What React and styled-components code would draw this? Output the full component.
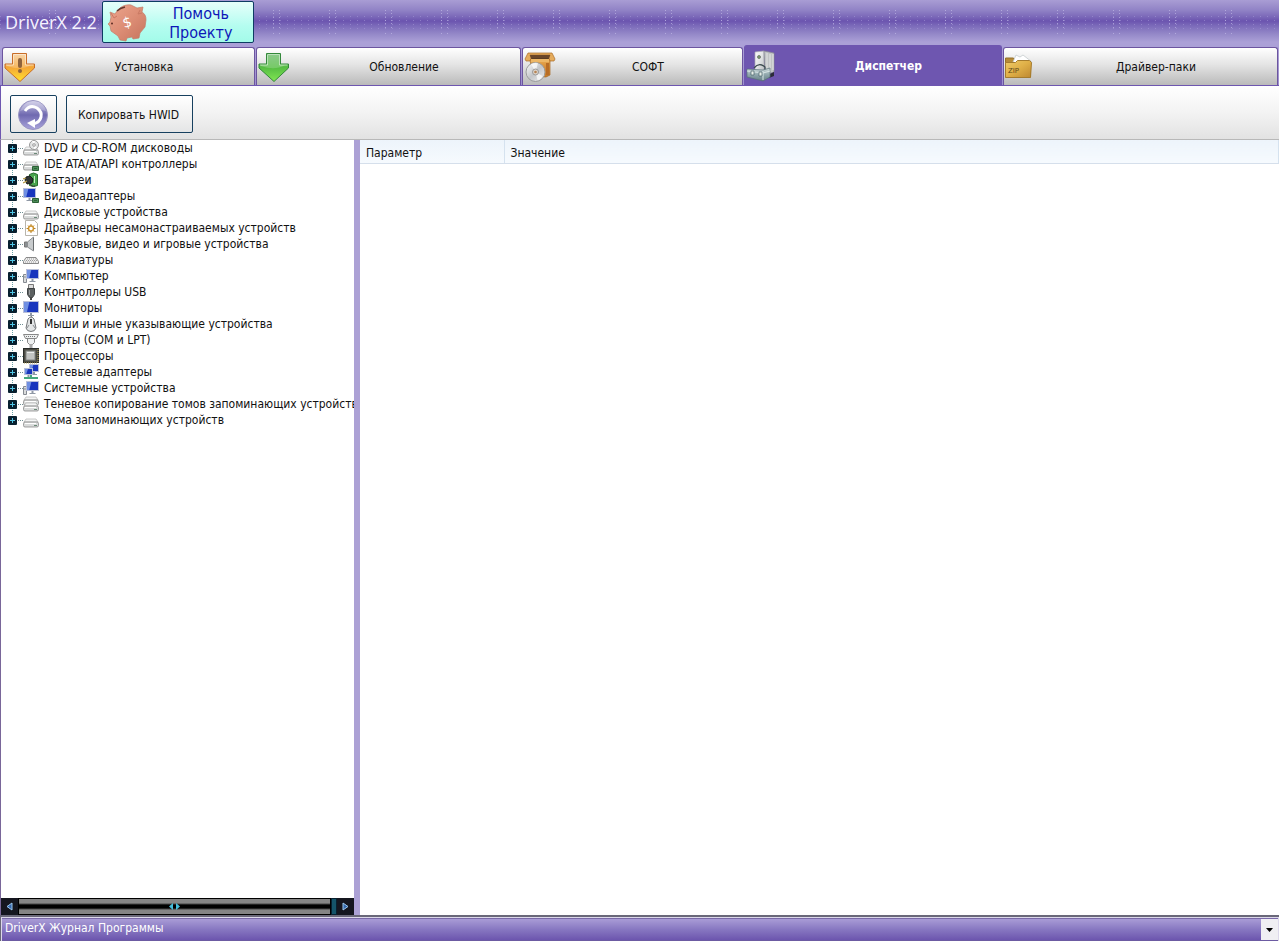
import React from "react";
import styled, { createGlobalStyle, css } from "styled-components";

const sans = `Tahoma, "DejaVu Sans Condensed", "DejaVu Sans", sans-serif`;
const purple = "#6e56b0";
const lilac = "#aca1d5";

const GlobalStyle = createGlobalStyle`
  * { box-sizing: border-box; }
  body { margin: 0; font: 12px/16px ${sans}; color: #111; background: #fff; }
  button, select { font: inherit; color: inherit; }
  svg { flex: none; }
`;

const Window = styled.div`
  display: flex;
  flex-direction: column;
  height: 100vh;
  overflow: hidden;
`;

/* A row of faint dots every 7px, and a row of bright dot pairs every 56px. */
const dots = (y, color) =>
  `linear-gradient(90deg, ${color} 1px, transparent 1px) 0 ${y}px / 7px 1px repeat-x`;
const pairs = (y, color) =>
  `linear-gradient(90deg, ${color} 1px, transparent 1px 6px, ${color} 6px 7px, transparent 7px) 49px ${y}px / 56px 1px repeat-x`;

const Header = styled.header`
  display: flex;
  align-items: center;
  gap: 5px;
  height: 45px;
  padding: 0 0 1px 5px;
  background:
    ${[10, 13, 17, 20, 23, 27, 33].map((y) => pairs(y, "#c9c2ec99")).join(",")},
    ${[16, 20, 24, 28].map((y) => dots(y, "#a99cdb88")).join(",")},
    linear-gradient(#a99dd4 0, #9183c6 10px, #7a67b8 17px, #6b54af 21px, #7c6bba 26px, #9488c8 34px, #aba0d7 42px, #aba0d7 100%);
`;

const Title = styled.h1`
  margin: 0;
  font: 18px/24px "Open Sans", "Noto Sans", sans-serif;
  color: #f6f3ff;
  white-space: nowrap;
`;

const HelpButton = styled.button`
  display: flex;
  align-items: center;
  width: 152px;
  height: 42px;
  padding: 0 4px;
  border: 1px solid #0d3c63;
  border-radius: 2px;
  background: linear-gradient(#e6fffa, #b4fdf0 60%, #a3fbe9);
  color: #0d17b8;
  font-size: 16px;
  line-height: 19px;
`;

const HelpLabel = styled.span`
  flex: 1;
  padding: 1px 0 0 6px;
`;

const Tabs = styled.nav`
  display: grid;
  grid-template-columns: 253fr 265fr 221fr 258fr 275fr;
  height: 41px;
  padding: 0 1px 0 2px;
  gap: 1px;
  background: linear-gradient(#aba0d7 2px, #9d90ce);
  border-bottom: 1px solid ${purple};
`;

const Tab = styled.button`
  display: flex;
  align-items: center;
  min-width: 0;
  margin-top: 2px;
  padding: 0 2px 0 1px;
  border: 1px solid #6c559f;
  border-bottom: 0;
  border-radius: 3px 3px 0 0;
  background: linear-gradient(#fff, #e4e4e4 45%, #bababa);
  ${(p) => p.$active && css`
    margin-top: 0;
    border-color: ${purple};
    background: ${purple};
    color: #fff;
    font-weight: bold;
  `}
`;

const TabLabel = styled.span`
  flex: 1;
  text-align: center;
`;

const Toolbar = styled.div`
  display: flex;
  gap: 9px;
  height: 54px;
  padding: 9px 9px 6px;
  border-left: 1px solid ${purple};
  border-bottom: 1px solid #b8b8b8;
  background: linear-gradient(#fff, #f3f3f3 50%, #e2e2e2);
`;

const ToolButton = styled.button`
  display: flex;
  align-items: center;
  justify-content: center;
  height: 38px;
  width: ${(p) => p.$width}px;
  padding: 2px 2px 0 0;
  border: 1px solid #17405f;
  border-radius: 2px;
  background: linear-gradient(#fff, #f0f0f0 60%, #e4e5e6);
  white-space: nowrap;
`;

const Panes = styled.main`
  display: flex;
  flex: 1;
  min-height: 0;
`;

const TreePane = styled.section`
  display: flex;
  flex-direction: column;
  flex: 0 0 360px;
  min-width: 0;
  border-left: 1px solid #796699;
  border-right: 6px solid ${lilac};
`;

const Tree = styled.ul`
  flex: 1;
  min-height: 0;
  margin: 0;
  padding: 0 0 0 7px;
  overflow: hidden;
  list-style: none;
`;

const TreeRow = styled.li`
  display: flex;
  align-items: center;
  height: 16px;
  white-space: nowrap;
  background: repeating-linear-gradient(#6aa1a9 0 1px, transparent 1px 2px) 4px 0 / 1px 100% no-repeat;
  &:last-child { background-size: 1px 8px; }
`;

const Expander = styled.button`
  display: flex;
  flex: none;
  width: 9px;
  height: 9px;
  padding: 0;
  border: 0;
  background: #08202f;
  border-radius: 1px;
`;

const Branch = styled.span`
  flex: none;
  width: 6px;
  height: 1px;
  background: repeating-linear-gradient(90deg, transparent 0 1px, #6f8f94 1px 2px);
`;

const RowLabel = styled.span`
  padding-left: 5px;
`;

const ScrollBar = styled.div`
  display: flex;
  height: 17px;
  background: #15161f;
`;

const ScrollArrow = styled.button`
  display: flex;
  align-items: center;
  justify-content: center;
  width: 17px;
  padding: 0;
  border: 0;
  background: #15161f;
`;

const Thumb = styled.div`
  display: flex;
  align-items: center;
  justify-content: center;
  flex: 1;
  border: 1px solid #000;
  background: linear-gradient(#858585 0 4px, #000 6px 9px, #858585 11px);
`;

const ScrollRest = styled.div`
  width: 6px;
  border: 1px solid #08202f;
  background: #155469;
`;

const Details = styled.section`
  flex: 1;
  min-width: 0;
`;

const Table = styled.table`
  width: 100%;
  border-collapse: collapse;
  table-layout: fixed;
`;

const HeadCell = styled.th`
  width: ${(p) => p.$width || "auto"};
  height: 23px;
  padding: 3px 6px 0;
  border-right: 1px solid #d5e2ef;
  border-bottom: 1px solid #d5dfeb;
  background: linear-gradient(#edf4fb, #f6fafe);
  text-align: left;
  font-weight: normal;
`;

const Footer = styled.footer`
  position: relative;
  height: 26px;
  padding: 1px 1px 0;
  border-top: 2px solid #6a6879;
  border-left: 1px solid #6a6879;
  background: #dcd8ea;
`;

const LogSelect = styled.select`
  display: block;
  width: 100%;
  height: 23px;
  padding: 0 22px 4px 3px;
  border: 0;
  border-top: 1px solid #7a6aa8;
  border-bottom: 1px solid #6c5ba2;
  border-radius: 0;
  appearance: none;
  background: linear-gradient(#a99cd6, #8777c1 50%, #6c55ae);
  color: #fff;
`;

const DropArrow = styled.span`
  position: absolute;
  top: 2px;
  right: 1px;
  display: flex;
  align-items: center;
  justify-content: center;
  width: 17px;
  height: 21px;
  background: #f0eff3;
  pointer-events: none;
`;

const Svg = ({ size = 16, children }) => (
  <svg width={size} height={size} viewBox={`0 0 ${size} ${size}`} aria-hidden="true">
    {children}
  </svg>
);

const Grad = ({ id, from, mid, to, diagonal }) => (
  <linearGradient id={id} x1="0" y1="0" x2={diagonal ? 1 : 0} y2="1">
    <stop offset="0" stopColor={from} />
    {mid && <stop offset=".5" stopColor={mid} />}
    <stop offset="1" stopColor={to} />
  </linearGradient>
);

const PiggyIcon = () => (
  <svg width="40" height="40" viewBox="0 0 40 40" aria-hidden="true">
    <defs><Grad id="pig" from="#eda68e" mid="#dd8e76" to="#c5735c" diagonal /></defs>
    <path fill="url(#pig)" stroke="#c37c68" strokeWidth=".7" d="M3 20 4 15 3 10l5 2C12 5 18 2 24 3l6 3 6-1-1 5c3 2 4 4 4 8l-1 7-5 6-1 5-6 1-1-2-5 1-1 3-6-1-2-4-7-5-1-5-2-2z" />
    <path stroke="#653830" strokeWidth="1.6" d="M10 9q3-3 8-4" fill="none" />
    <path stroke="#c97963" strokeWidth="1" d="m33 8-2 4 4-1M4 11l3 5 3-2" fill="none" />
    <circle cx="5" cy="21.500" r="1" fill="#5e2c25" />
    <text x="20" y="25" textAnchor="middle" transform="rotate(-15 20 20)" fill="#fff" fontFamily="DejaVu Sans, sans-serif" fontSize="14">$</text>
  </svg>
);

const ArrowIcon = ({ id, light, main, dark, edge, alert }) => (
  <Svg size={32}>
    <defs><Grad id={id} from={light} mid={main} to={dark} /></defs>
    <path fill={`url(#${id})`} stroke={edge} d="M8.500 2.500h14V13h8v4L16 30.500 1 17v-4h7.500z" />
    <path stroke="#fff" strokeOpacity=".55" fill="none" d="M9.500 3.500h12V14h8M2 14h7.500V4" />
    <path fill="#fff" fillOpacity=".2" d="M10 4h11v10h6q-10 6-24 1v-1h7z" />
    {alert && (
      <>
        <rect x="14" y="7" width="4" height="10" rx="2" fill="#8e633c" />
        <circle cx="16" cy="20" r="2" fill="#8e633c" />
      </>
    )}
  </Svg>
);

const BoxDiscIcon = () => (
  <Svg size={32}>
    <defs>
      <Grad id="box" from="#e9ad55" mid="#d78c35" to="#c57a28" />
      <Grad id="disc" from="#fff" mid="#c4c6c9" to="#f1f1f1" diagonal />
    </defs>
    <path fill="url(#box)" stroke="#a76823" strokeWidth=".7" d="M6 8h20v16l-4 2-14-1z" />
    <path fill="#5a3b22" d="M5 4h22l-2 4H7z" />
    <path fill="#e5ac5d" stroke="#aa6b27" strokeWidth=".7" d="M4 2h24l3 6-1 2h-4l-1-3 1-3H6l1 3-1 3H2L1 8z" />
    <path fill="#6a4527" d="M6 4h20l-1 3H7z" />
    <path fill="#edb766" d="M7 8h18v3H7z" />
    <path fill="#b96d25" d="M22 12h3v12h-3z" />
    <circle cx="11.500" cy="21" r="9.500" fill="url(#disc)" stroke="#9a9b9c" />
    <path fill="#fff" fillOpacity=".7" d="M11.500 21 7 13q4-2 7-1zM11.500 21l7 4q-2 4-5 4z" />
    <circle cx="11.500" cy="21" r="3" fill="#ddd4ca" stroke="#999" />
    <circle cx="11.500" cy="21" r="1.300" fill="#b78353" />
  </Svg>
);

const ToolboxIcon = () => (
  <Svg size={32}>
    <defs>
      <Grad id="tower" from="#fcfcfc" mid="#e2e4e5" to="#b9bdc0" diagonal />
      <Grad id="case" from="#d2dede" mid="#91a8ad" to="#668086" />
    </defs>
    <path fill="url(#tower)" stroke="#a9aab2" strokeWidth=".7" d="m9 2 9-1v21H9z" />
    <path fill="#c0c3c4" stroke="#848590" strokeWidth=".7" d="m18 1 10 2v19l-9 3z" />
    <path stroke="#e3e5e6" d="M21 3v19m3-18v17m3-17v16" />
    <circle cx="13" cy="7" r="1.500" fill="#7d9c6f" stroke="#59635a" strokeWidth=".7" />
    <path fill="#2b2b38" d="m22 25 6-3v4l-5 2z" />
    <path fill="none" stroke="#38484c" strokeWidth="1.200" d="M8 18q5-6 11-1v3" />
    <path fill="url(#case)" stroke="#587078" strokeWidth=".7" d="m1 19 16 1 7-2v9l-7 4-16-4z" />
    <path stroke="#d7e5e5" fill="none" d="m1 21 16 2 7-2M17 21v9" />
    <path fill="#e7efe9" stroke="#48616a" strokeWidth=".7" d="M5 21h3v4H5zM13 22h3v4h-3z" />
  </Svg>
);

const ZipIcon = () => (
  <Svg size={32}>
    <defs><Grad id="zip" from="#efcb69" mid="#dfaf47" to="#bd8730" diagonal /></defs>
    <path fill="#b68b38" stroke="#94702a" d="M.5 26V7h8l2 3h15v16z" />
    <path fill="#fff" stroke="#bfc5c9" strokeWidth=".7" d="m8 11 3-7 4 2 3-2 9 7-3 5z" />
    <path fill="url(#zip)" stroke="#a57b2d" d="M.5 11.500h10l2-2h12l2 2-1 15H.5z" />
    <text x="3" y="22" fill="#5f4818" fontFamily="DejaVu Sans, sans-serif" fontSize="7">ZIP</text>
  </Svg>
);

const RefreshIcon = () => (
  <Svg size={32}>
    <defs><Grad id="orb" from="#c7c4e4" mid="#6f69b0" to="#aaa5dc" /></defs>
    <circle cx="16" cy="16" r="14.500" fill="url(#orb)" stroke="#9894c2" />
    <path fill="#fff" fillOpacity=".25" d="M3 12Q8 1 18 2q9 1 11 10Q14 7 3 12z" />
    <path fill="none" stroke="#fff" strokeWidth="3" d="M8 12q5-7 12-3c7 5 5 14-4 16" />
    <path fill="#fff" d="m10 24 8-4v9z" />
  </Svg>
);

const Drive = ({ y = 0 }) => (
  <g transform={`translate(0 ${y})`}>
    <path fill="#f3f4f4" stroke="#b5b5b5" strokeWidth=".7" d="m3 6-2 3h14l-2-3z" />
    <rect x=".5" y="9" width="15" height="5" rx="1.500" fill="#d9dbdb" stroke="#8a8a8a" strokeWidth=".8" />
    <path stroke="#fff" d="M2 10.500h11" />
    <path stroke="#6b8a78" d="M11 12.500h3" />
  </g>
);

const Screen = ({ x = 0, y = 0, w = 12, h = 9 }) => (
  <g transform={`translate(${x} ${y})`}>
    <rect x=".5" y=".5" width={w - 1} height={h - 1} fill="#1936bd" stroke="#b8bfda" />
    <path fill="#6f8fe2" d={`M1 1h${w / 3}L${w / 4} ${h - 1}H1z`} />
    <path fill="#8f98a5" d={`M${w / 2 - 1} ${h}h2v2h2v1h-6v-1h2z`} />
  </g>
);

const Chip = () => (
  <path fill="#4c8b58" stroke="#2c6236" d="M9.500 10.500h6v4h-6zM11 12.500h3" />
);

const Tower = () => <path fill="#dadcdd" stroke="#868b92" d="M.5 6.500h3v8h-3zM1 9h2" />;

const icons = {
  dvd: (
    <>
      <Drive y={1} />
      <circle cx="11" cy="5" r="4.500" fill="#e3e5e5" stroke="#999" />
      <path fill="#fff" d="m11 5-2-4h3zM11 5l3 3-3 1z" />
      <circle cx="11" cy="5" r="1.300" fill="#fff" stroke="#999" />
    </>
  ),
  ide: <><Drive /><Chip /></>,
  battery: (
    <>
      <path fill="#48a44d" stroke="#286b2e" d="M6.500 2.500q4-3 8 0v11q-4 2-8 0z" />
      <path stroke="#c8ecc5" d="M11.500 4v7" />
      <path fill="#303434" stroke="#171b1b" d="m3 5 4-1 3 3-1 4-5 1-2-4z" />
      <path stroke="#b59b48" strokeWidth="1.200" d="m0 7 3-1m-3 5 4-2" />
      <path fill="none" stroke="#333" d="M7 11q1 4 5 3" />
    </>
  ),
  video: <><Screen w={13} h={10} /><Chip /></>,
  disk: <Drive y={1} />,
  generic: (
    <>
      <path fill="#fff" stroke="#b8b5ac" d="M2.500.5h9l3 3v12h-12z" />
      <circle cx="8" cy="8.500" r="2.500" fill="none" stroke="#d29831" strokeWidth="1.500" />
      <path stroke="#b98328" d="M8 4v2m0 5v2M3.500 8.500h2m5 0h2M5 5.500l1 1m4 4 1 1m0-6-1 1m-4 4-1 1" />
    </>
  ),
  sound: (
    <>
      <path fill="#8c9093" stroke="#777" d="M1.500 6h3v5h-3z" />
      <path fill="#c8cbcd" stroke="#8b8f91" d="m4.500 6 6-5v14l-6-4z" />
      <path stroke="#686c6e" d="M10.500 2v12" />
    </>
  ),
  keyboard: (
    <>
      <path fill="#eee" stroke="#888" d="m3 5.500-2.500 4v2h15v-2L13 5.500z" />
      <path stroke="#999" strokeDasharray="1 1" d="M4 7h9M3 8.500h11M2 10h12" />
    </>
  ),
  computer: <><Tower /><Screen x={3} y={1} w={13} h={10} /></>,
  usb: (
    <>
      <path fill="#ddd" stroke="#777" d="M5.500.5h5v4h-5z" />
      <path fill="#5c6061" stroke="#3f4344" d="M4.500 4.500h7v6l-2 3h-3l-2-3z" />
      <path stroke="#989c9d" d="M6.500 6v5" /><path stroke="#444" strokeWidth="2" d="M8 13v3" />
    </>
  ),
  monitor: <Screen y={1} w={16} h={12} />,
  mouse: (
    <>
      <path fill="none" stroke="#777" d="M8 4q3-2 0-4" />
      <path fill="#e3e5e6" stroke="#737679" d="M5 3q3-4 6 0l2 9q-1 3.500-5 3.500T3 12z" />
      <path fill="#333" d="M7 3h2v5H7z" /><path stroke="#8a8d90" d="m6 9-2 3m6-3 2 3" />
    </>
  ),
  port: (
    <>
      <path fill="#eef0f0" stroke="#888" d="M.5 2.500h15l-2 4h-11zM4.500 6.500h7v4l-2 2h-3l-2-2z" />
      <path stroke="#777" strokeDasharray="1 1" d="M3 4.500h10" /><path stroke="#aaa" strokeWidth="3" d="M8 12v4" />
    </>
  ),
  cpu: (
    <>
      <rect x=".5" y=".5" width="15" height="14" fill="#4b4b43" stroke="#292c29" />
      <path stroke="#b7a35d" strokeDasharray="1 1" d="M1 15h14M15 1v14" />
      <rect x="3" y="3" width="9" height="9" fill="#c2c4c2" stroke="#858986" />
      <path stroke="#eceeed" d="M4 4.500h7" />
    </>
  ),
  network: (
    <>
      <Screen x={6} w={10} h={8} /><Screen x={1} y={4} w={9} h={7} />
      <path stroke="#45a77d" strokeWidth="2" d="M1 14h14M8 11v4" />
    </>
  ),
  shadow: <><Drive y={-5} /><Drive y={1} /></>,
};

const tabs = [
  { label: "Установка", icon: <ArrowIcon id="install" light="#f6cb96" main="#f4a737" dark="#ffe22d" edge="#c86d28" alert /> },
  { label: "Обновление", icon: <ArrowIcon id="update" light="#70bd70" main="#56bd43" dark="#82e653" edge="#33883a" /> },
  { label: "СОФТ", icon: <BoxDiscIcon /> },
  { label: "Диспетчер", icon: <ToolboxIcon />, active: true },
  { label: "Драйвер-паки", icon: <ZipIcon /> },
];

const devices = [
  ["dvd", "DVD и CD-ROM дисководы"],
  ["ide", "IDE ATA/ATAPI контроллеры"],
  ["battery", "Батареи"],
  ["video", "Видеоадаптеры"],
  ["disk", "Дисковые устройства"],
  ["generic", "Драйверы несамонастраиваемых устройств"],
  ["sound", "Звуковые, видео и игровые устройства"],
  ["keyboard", "Клавиатуры"],
  ["computer", "Компьютер"],
  ["usb", "Контроллеры USB"],
  ["monitor", "Мониторы"],
  ["mouse", "Мыши и иные указывающие устройства"],
  ["port", "Порты (COM и LPT)"],
  ["cpu", "Процессоры"],
  ["network", "Сетевые адаптеры"],
  ["computer", "Системные устройства"],
  ["shadow", "Теневое копирование томов запоминающих устройств"],
  ["disk", "Тома запоминающих устройств"],
];

export default function App() {
  return (
    <Window>
      <GlobalStyle />
      <Header>
        <Title>DriverX 2.2</Title>
        <HelpButton>
          <PiggyIcon />
          <HelpLabel>Помочь Проекту</HelpLabel>
        </HelpButton>
      </Header>
      <Tabs>
        {tabs.map((tab) => (
          <Tab key={tab.label} $active={tab.active}>
            {tab.icon}
            <TabLabel>{tab.label}</TabLabel>
          </Tab>
        ))}
      </Tabs>
      <Toolbar>
        <ToolButton $width={47} aria-label="Обновить"><RefreshIcon /></ToolButton>
        <ToolButton $width={127}>Копировать HWID</ToolButton>
      </Toolbar>
      <Panes>
        <TreePane>
          <Tree>
            {devices.map(([icon, label]) => (
              <TreeRow key={label}>
                <Expander aria-label={label}>
                  <Svg size={9}><path stroke="#52c6e6" d="M4.500 2v5M2 4.500h5" /></Svg>
                </Expander>
                <Branch />
                <Svg>{icons[icon]}</Svg>
                <RowLabel>{label}</RowLabel>
              </TreeRow>
            ))}
          </Tree>
          <ScrollBar>
            <ScrollArrow aria-label="Влево">
              <Svg size={9}><path fill="#3568ad" stroke="#9cc8ee" d="M7 1v7L2 4.500z" /></Svg>
            </ScrollArrow>
            <Thumb>
              <svg width="11" height="7" viewBox="0 0 11 7" aria-hidden="true">
                <path fill="#45bddb" d="M4 0v7L0 3.500zM7 0v7l4-3.500z" />
              </svg>
            </Thumb>
            <ScrollRest />
            <ScrollArrow aria-label="Вправо">
              <Svg size={9}><path fill="#3568ad" stroke="#9cc8ee" d="M2 1v7l5-3.500z" /></Svg>
            </ScrollArrow>
          </ScrollBar>
        </TreePane>
        <Details>
          <Table>
            <thead>
              <tr>
                <HeadCell $width="144px">Параметр</HeadCell>
                <HeadCell>Значение</HeadCell>
              </tr>
            </thead>
          </Table>
        </Details>
      </Panes>
      <Footer>
        <LogSelect aria-label="Журнал">
          <option>DriverX Журнал Программы</option>
        </LogSelect>
        <DropArrow>
          <svg width="7" height="4" viewBox="0 0 7 4" aria-hidden="true"><path d="M0 0h7L3.500 4z" /></svg>
        </DropArrow>
      </Footer>
    </Window>
  );
}
